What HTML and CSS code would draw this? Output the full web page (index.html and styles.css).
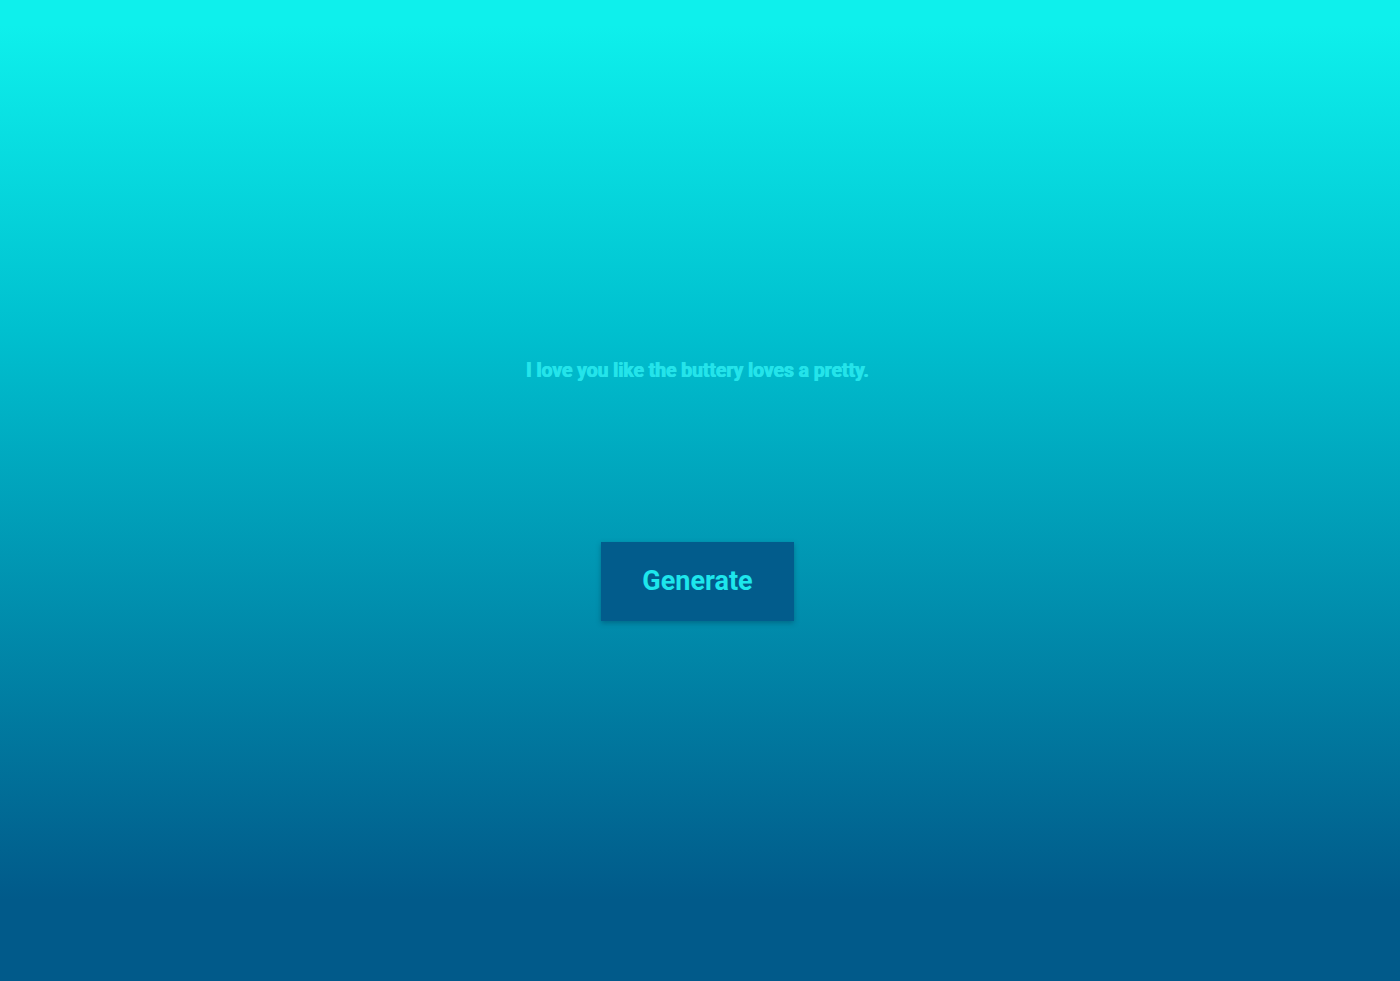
FILE: index.html
```html
<!DOCTYPE html>
<html lang="en">
<head>
<meta charset="utf-8">
<title>Generator</title>
<link rel="stylesheet" href="styles.css">
</head>
<body>
<main class="page">
  <p class="quote">I love you like the buttery loves a pretty.</p>
  <button class="generate" type="button">Generate</button>
</main>
</body>
</html>
```

FILE: styles.css
```css
html, body {
  margin: 0;
  padding: 0;
  height: 100%;
}
body {
  background: linear-gradient(to bottom, #0ef0ec 0px, #0ef0ec 25px, #00c0cf 330px, #015a8a 900px, #015a8a 100%);
  font-family: Roboto, "Liberation Sans", sans-serif;
}
.page {
  height: 981px;
  display: flex;
  flex-direction: column;
  align-items: center;
  padding-right: 5px;
}
.quote {
  margin: 358px 0 0 0;
  font-size: 19.3px;
  font-weight: 700;
  line-height: 26px;
  color: #24e4ea;
  letter-spacing: 0;
  text-shadow: 0.4px 0 0 #24e4ea, -0.4px 0 0 #24e4ea;
}
.generate {
  margin-top: 158px;
  width: 193px;
  height: 79px;
  padding: 0 0 2px;
  border: none;
  background: #025c8c;
  color: #1de6ec;
  font-family: Roboto, "Liberation Sans", sans-serif;
  font-size: 27px;
  font-weight: 700;
  box-shadow: 0 2px 5px rgba(0, 40, 70, 0.35);
  cursor: pointer;
}
```
